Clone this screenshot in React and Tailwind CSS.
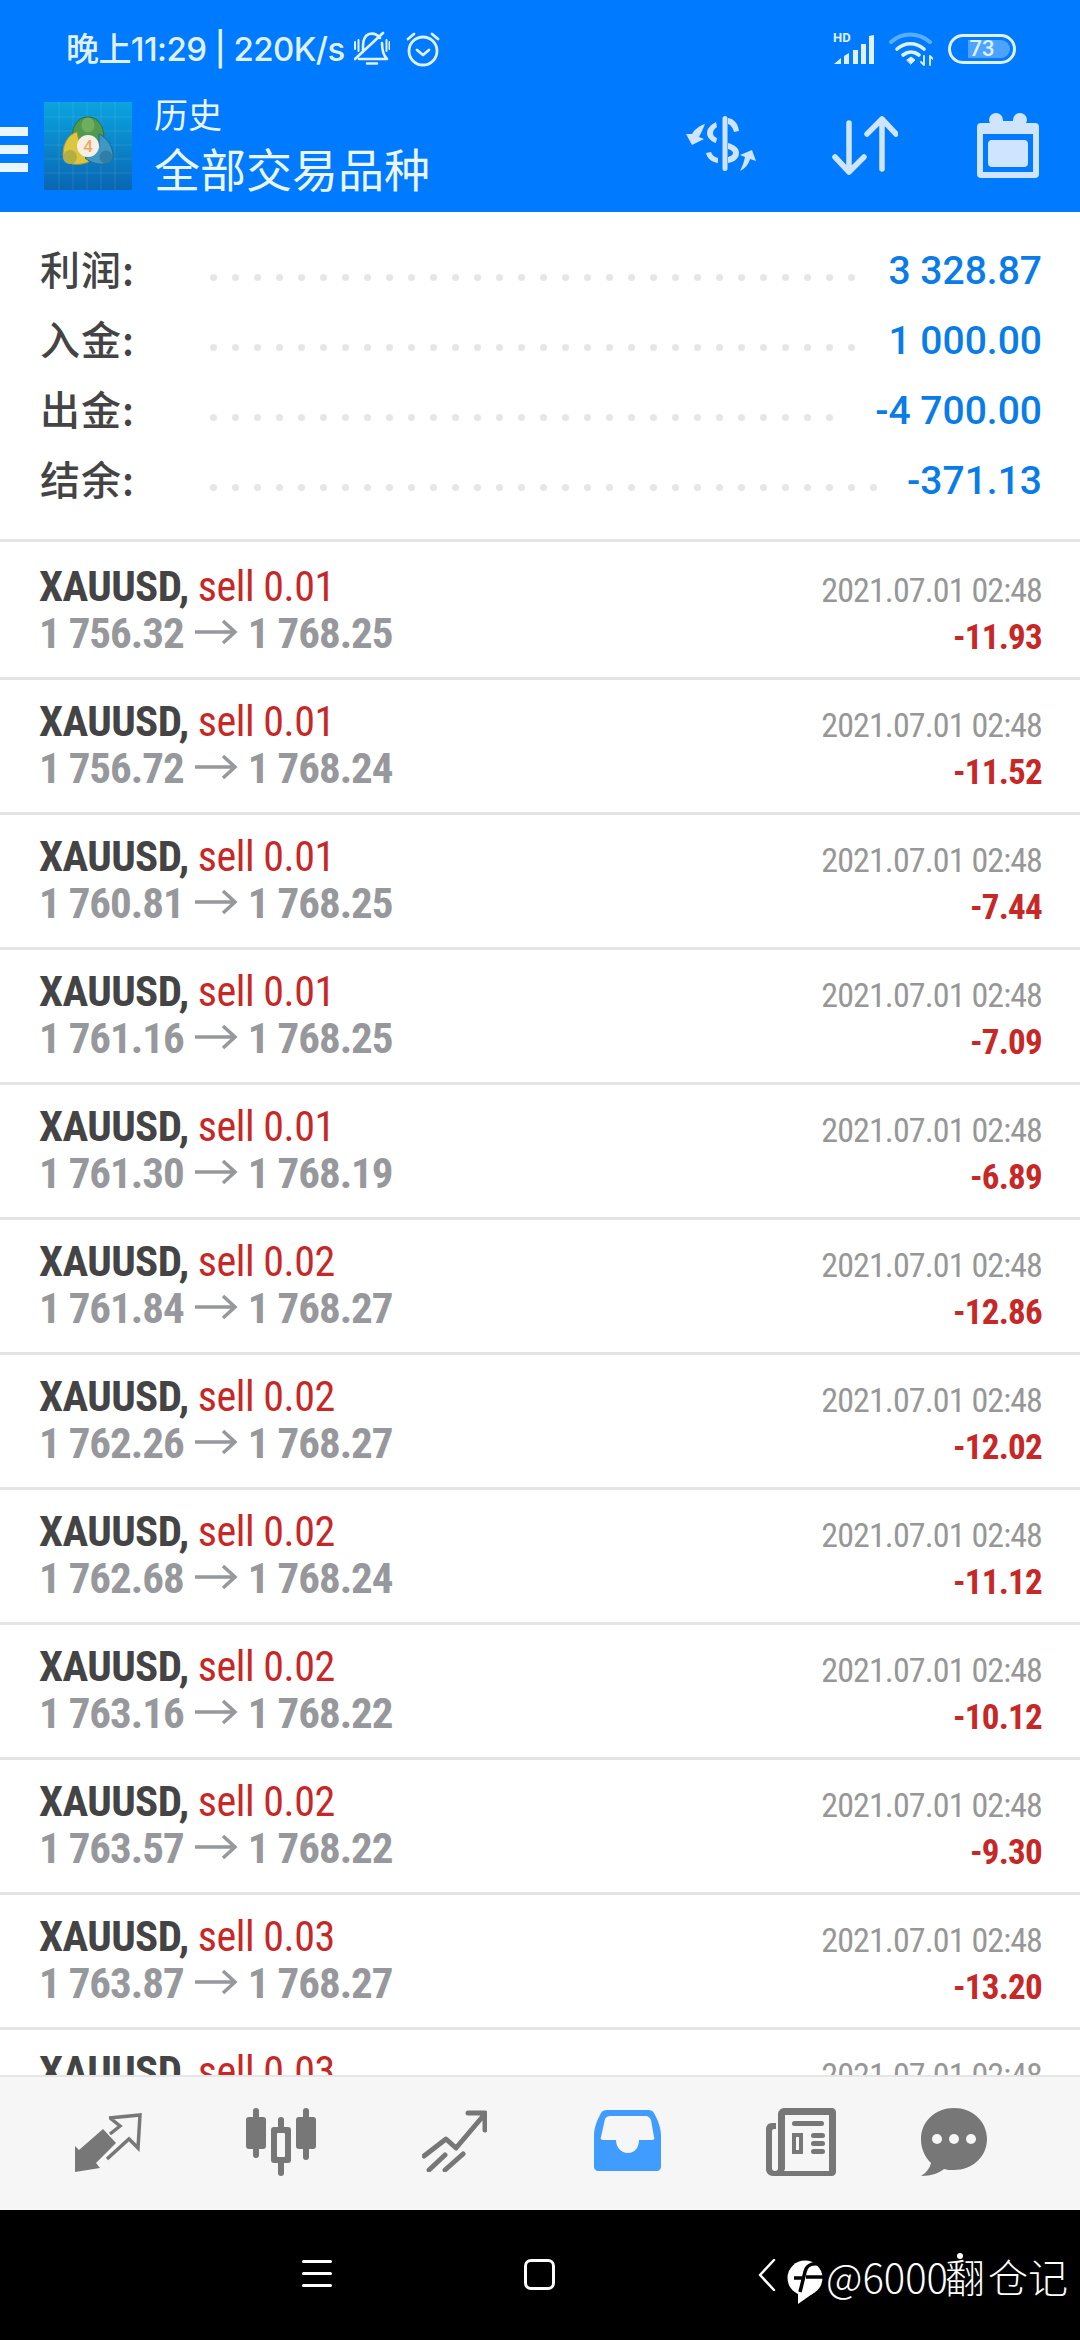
const summary = [
  { label: '利润', value: '3 328.87', dots: 30 },
  { label: '入金', value: '1 000.00', dots: 30 },
  { label: '出金', value: '-4 700.00', dots: 29 },
  { label: '结余', value: '-371.13', dots: 31 },
]

const trades = [
  ['0.01', '1 756.32', '1 768.25', '-11.93'],
  ['0.01', '1 756.72', '1 768.24', '-11.52'],
  ['0.01', '1 760.81', '1 768.25', '-7.44'],
  ['0.01', '1 761.16', '1 768.25', '-7.09'],
  ['0.01', '1 761.30', '1 768.19', '-6.89'],
  ['0.02', '1 761.84', '1 768.27', '-12.86'],
  ['0.02', '1 762.26', '1 768.27', '-12.02'],
  ['0.02', '1 762.68', '1 768.24', '-11.12'],
  ['0.02', '1 763.16', '1 768.22', '-10.12'],
  ['0.02', '1 763.57', '1 768.22', '-9.30'],
  ['0.03', '1 763.87', '1 768.27', '-13.20'],
  ['0.03', '1 764.10', '1 768.27', '-12.51'],
]

function StatusBar() {
  return (
    <div className="h-[90px] flex items-center pl-[66px] pr-[64px] pt-[8px] text-[#dff1ff]">
      <span className="text-[33px] leading-none font-['Inter','Noto_Sans_CJK_SC',sans-serif] font-medium whitespace-nowrap tracking-[-0.6px]">晚上11:29 | 220K/s</span>
      {/* muted bell */}
      <svg className="ml-[9px]" width="36" height="36" viewBox="0 0 36 36" fill="none" stroke="currentColor" strokeWidth="2.6" strokeLinecap="round" strokeLinejoin="round">
        <path d="M5 28H33C29 24 28 20 28 12M26 7C23 3 19 2 15 3 10 5 9 10 9 15v6M1 28 29 2M13 32.5h10" />
        <path d="M1 11v7M4.5 9v11M32.5 9v11M35.5 11v7" strokeWidth="2" />
      </svg>
      <svg className="ml-[15px]" width="36" height="36" viewBox="0 0 36 36" fill="none" stroke="currentColor" strokeWidth="2.8" strokeLinecap="round" strokeLinejoin="round">
        <circle cx="18" cy="20" r="14" />
        <path d="M12 19l6 5 6-5M3 8l6-5M33 8l-6-5" />
      </svg>
      <div className="ml-auto flex items-center">
        {/* HD signal */}
        <div className="relative w-[41px] h-[30px]">
          <span className="absolute left-0 top-[-3px] text-[13px] leading-none font-bold font-['Roboto',sans-serif]">HD</span>
          <svg className="absolute inset-0" width="41" height="30" viewBox="0 0 41 30" fill="currentColor">
            <path d="M1 30l7-6v6zM11 22l5-3v11h-5zM20 30V16h5v14zM28 30V10h5v20zM36 30V2l5-1v29z" />
          </svg>
        </div>
        <svg className="ml-[15px]" width="44" height="34" viewBox="0 0 44 34" fill="none" strokeLinecap="round">
          <path d="M2 10C13 0 29 0 41 10" stroke="#5aaeff" strokeWidth="4" />
          <path d="M8 17c8-7 19-7 27 0M14 23c5-4 11-4 16 0" stroke="currentColor" strokeWidth="3.6" />
          <path d="M18 28l4-3 4 3-4 4z" fill="currentColor" stroke="currentColor" />
          <path d="M35 24v9M32 30l3 3M41 33v-9M41 24l3 3" stroke="currentColor" strokeWidth="1.8" />
        </svg>
        <div className="ml-[15px] relative w-[68px] h-[30px] rounded-full border-[3px] border-[#dff1ff]">
          <div className="absolute right-[3px] top-[3px] bottom-[3px] w-[42px] rounded-r-full bg-[#4da3ff]" />
          <span className="absolute inset-0 flex items-center justify-center text-[22px] leading-none font-medium font-['Roboto',sans-serif]">73</span>
        </div>
      </div>
    </div>
  )
}

function Logo() {
  return (
    <svg width="88" height="88" viewBox="0 0 88 88">
      <defs>
        <linearGradient id="logoBg" x1="0" y1="0" x2="0" y2="1">
          <stop offset="0" stopColor="#0aa4e0" />
          <stop offset="1" stopColor="#0a66b2" />
        </linearGradient>
      </defs>
      <rect width="88" height="88" fill="url(#logoBg)" />
      <path d="M15 0v88M29 0v88M43 0v88M57 0v88M71 0v88M0 15h88M0 29h88M0 43h88M0 57h88M0 71h88" stroke="#ffffff" strokeOpacity="0.1" strokeWidth="1" />
      <path d="M29 40C26 27 33 15 44 15s18 12 15 25l-15 6z" fill="#4f9a4c" stroke="#2f6d3a" strokeWidth="1" />
      <ellipse cx="44" cy="23" rx="6.5" ry="7.5" fill="#6fae5f" />
      <path d="M33 30c-8 2-14 11-14 22 0 4 2 7 6 9 8 3 18 1 24-4L36 44z" fill="#dcc63e" stroke="#a8982b" strokeWidth="1" />
      <circle cx="26" cy="55" r="7" fill="#b5ad45" />
      <path d="M55 32c8 4 14 12 14 22 0 3-2 6-5 7-8 3-17 0-23-5l14-12z" fill="#3f97c4" stroke="#22688f" strokeWidth="1" />
      <circle cx="62" cy="55" r="6.5" fill="#2f7ea8" />
      <circle cx="44" cy="44" r="11" fill="#f7efe6" />
      <text x="44" y="50" textAnchor="middle" fontSize="17" fontWeight="500" fill="#f0a860" fontFamily="Roboto, sans-serif">4</text>
    </svg>
  )
}

function TitleBar() {
  return (
    <div className="h-[122px] flex items-start text-[#e9f5ff]">
      <div className="w-[28px] mt-[37px] flex flex-col gap-[9px]">
        <div className="h-[9px] bg-[#e9f5ff]" />
        <div className="h-[9px] bg-[#e9f5ff]" />
        <div className="h-[9px] bg-[#e9f5ff]" />
      </div>
      <div className="ml-[16px] mt-[12px]"><Logo /></div>
      <div className="ml-[22px] flex flex-col font-['Noto_Sans_CJK_SC',sans-serif]">
        <span className="mt-[4px] text-[34px] leading-[40px]">历史</span>
        <span className="mt-[4px] text-[46px] leading-[58px] whitespace-nowrap">全部交易品种</span>
      </div>
      <div className="ml-auto flex items-start text-[#cfe5ff]">
        <svg className="mt-[26px]" width="72" height="56" viewBox="0 0 72 56" fill="currentColor">
          <rect x="36.5" y="0" width="5" height="55" rx="2.5" />
          <path d="M42 2c6 1 10 5 11 13l-5 1c-1-4-3-7-6-8z" />
          <path d="M30 6c-6 3-9 7-9 11s3 8 9 10l1-5c-3-1-4-3-4-5s1-4 4-6z" />
          <path d="M20 37l5-1c1 3 3 5 7 6v5c-7-1-11-5-12-10z" />
          <path d="M42 27c7 2 11 5 11 10s-4 9-11 10v-6c3-1 5-2 5-4s-2-3-5-4z" />
          <path d="M19 8c-6 2-10 5-13 10L0 18l6 11 12-6-5-2c2-4 4-8 6-13z" />
          <path d="M54 55c6-3 9-8 10-12l6 2-4-11-12 5 5 2c-1 5-3 10-5 14z" />
        </svg>
        <svg className="ml-[74px] mt-[26px]" width="66" height="60" viewBox="0 0 66 60" fill="none" stroke="currentColor" strokeWidth="5.5" strokeLinecap="round" strokeLinejoin="round">
          <path d="M17 7v49M3 41l14 15 15-15" />
          <path d="M50 3v50M35 18L50 3l14 15" />
        </svg>
        <svg className="ml-[79px] mr-[41px] mt-[23px]" width="62" height="65" viewBox="0 0 62 65" fill="currentColor">
          <path fillRule="evenodd" d="M4 10h9a6 6 0 0 1-1-3 7 7 0 0 1 14 0v1h10V7a7 7 0 0 1 14 0 6 6 0 0 1-1 3h9a4 4 0 0 1 4 4v47a4 4 0 0 1-4 4H4a4 4 0 0 1-4-4V14a4 4 0 0 1 4-4zm2 11v38h50V21z" />
          <rect x="11" y="27" width="40" height="27" rx="4" />
        </svg>
      </div>
    </div>
  )
}

function SummaryRow({ label, value, dots }) {
  return (
    <div className="h-[70px] flex items-center">
      <span className="w-[170px] shrink-0 -mt-[5px] text-[40px] leading-none text-[#444] font-['Noto_Sans_CJK_SC',sans-serif] font-medium whitespace-nowrap tracking-[1px]">{label}:</span>
      <div className="flex gap-[15px] mt-[14px]">
        {Array.from({ length: dots }).map((_, i) => (
          <span key={i} className="w-[7px] h-[7px] rounded-full bg-[#e6e6e6]" />
        ))}
      </div>
      <span className="ml-auto mt-[3px] text-[39px] leading-none font-medium text-[#0a7ce8] font-['Roboto',sans-serif] whitespace-nowrap">{value}</span>
    </div>
  )
}

function TradeRow({ lots, open, close, profit }) {
  return (
    <div className="h-[135px] shrink-0 border-b-[3px] border-[#e4e4e4] pl-[39px] pr-[38px] pt-[18px] font-['Roboto',sans-serif] [font-stretch:75%] flex justify-between">
      <div className="flex flex-col">
        <div className="text-[43px] leading-[47px] whitespace-nowrap">
          <span className="font-bold text-[#444] tracking-[-0.6px]">XAUUSD,</span>
          <span className="ml-[9px] text-[42px] text-[#c62828] tracking-[-0.45px]">sell {lots}</span>
        </div>
        <div className="flex items-center text-[43px] leading-[47px] font-bold text-[#97989c] tracking-[-1px] whitespace-nowrap">
          <span>{open}</span>
          {/* long thin arrow, wider than any lucide arrow */}
          <svg className="ml-[11px] mr-[10px] -mt-[4px]" width="43" height="26" viewBox="0 0 43 26" fill="none" stroke="currentColor" strokeWidth="3.5" strokeLinejoin="miter">
            <path d="M0 13h40M28 2l12 11-12 11" />
          </svg>
          <span>{close}</span>
        </div>
      </div>
      <div className="flex flex-col items-end mt-[3px]">
        <span className="text-[34px] leading-[48px] font-normal text-[#979797] tracking-[-0.9px] whitespace-nowrap">2021.07.01 02:48</span>
        <span className="text-[35px] leading-[48px] font-bold text-[#c62828] tracking-[-0.75px]">{profit}</span>
      </div>
    </div>
  )
}

function BottomNav() {
  return (
    <div className="h-[135px] shrink-0 border-t-[2px] border-[#e6e6e6] bg-[#f6f6f6] flex items-start text-[#777]">
      <svg className="ml-[75px] mt-[36px]" width="67" height="59" viewBox="0 0 67 59" fill="currentColor">
        <path d="M0 33l4 4 24-21 13 14-20 20 4 5-25 4z" />
        <path fill="none" stroke="currentColor" strokeWidth="3.5" d="M34 5l31-3-2 33-9-9-22 20M35 21l10-8-10-8" />
      </svg>
      <svg className="ml-[104px] mt-[31px]" width="70" height="68" viewBox="0 0 70 68" fill="currentColor">
        <rect x="0" y="9" width="20" height="32" rx="3" />
        <rect x="7" y="0" width="6" height="50" rx="3" />
        <rect x="50" y="9" width="20" height="32" rx="3" />
        <rect x="57" y="0" width="6" height="52" rx="3" />
        <rect x="32" y="9" width="6" height="59" rx="3" />
        <rect x="25" y="19" width="20" height="36" rx="3" />
        <rect x="31" y="25" width="8" height="24" rx="1" fill="#f6f6f6" />
      </svg>
      <svg className="ml-[106px] mt-[33px]" width="65" height="62" viewBox="0 0 65 62" fill="none" stroke="currentColor" strokeWidth="5" strokeLinecap="round" strokeLinejoin="round">
        <path d="M2 46l22-17 10 9 28-33M46 3h17v17" />
        <path d="M7 60l16-15M23 60l18-16" />
      </svg>
      <svg className="ml-[107px] mt-[33px]" width="67" height="61" viewBox="0 0 67 61" fill="#409cff">
        <path fillRule="evenodd" d="M13 0h41c3 0 5 1 6 3 4 7 7 15 7 23v31c0 2-2 4-4 4H4c-2 0-4-2-4-4V26C0 18 3 10 7 3c1-2 3-3 6-3zm3 6c-2 0-4 1-5 3L7 27c-1 1 0 3 2 3h13c0 7 5 13 12 13s11-6 11-13h13c2 0 3-2 2-3L57 10c-1-2-3-4-5-4z" />
      </svg>
      <svg className="ml-[105px] mt-[31px]" width="70" height="68" viewBox="0 0 70 68" fill="currentColor">
        <path fillRule="evenodd" d="M18 0h48c2 0 4 2 4 4v60c0 2-2 4-4 4H7c-4 0-7-3-7-7V21c0-3 2-6 6-6h4v6H8c-1 0-2 1-2 2v37c0 2 1 3 3 3s3-1 3-3V6c0-3 3-6 6-6zm1 7v54l-1 2h45V7z" />
        <rect x="26" y="13" width="32" height="5" rx="2.5" />
        <path fillRule="evenodd" d="M26 25h11v21H26zm4 4v13h3V29z" />
        <rect x="45" y="25" width="14" height="5" rx="2.5" />
        <rect x="45" y="33" width="14" height="5" rx="2.5" />
        <rect x="45" y="41" width="14" height="5" rx="2.5" />
      </svg>
      <svg className="ml-[85px] mt-[31px]" width="66" height="68" viewBox="0 0 66 68" fill="currentColor">
        <path d="M33 0c18 0 33 13 33 31S51 62 33 62c-4 0-7 0-10-1-5 4-12 7-23 7 5-3 9-8 10-13C4 49 0 41 0 31 0 13 15 0 33 0z" />
        <circle cx="16" cy="31" r="5" fill="#f6f6f6" />
        <circle cx="33" cy="31" r="5" fill="#f6f6f6" />
        <circle cx="50" cy="31" r="5" fill="#f6f6f6" />
      </svg>
    </div>
  )
}

function SystemBar() {
  return (
    <div className="h-[130px] shrink-0 bg-black text-white flex items-start relative">
      <div className="ml-[302px] mt-[50px] w-[30px] flex flex-col gap-[9px]">
        <div className="h-[3px] rounded-full bg-white" />
        <div className="h-[3px] rounded-full bg-white" />
        <div className="h-[3px] rounded-full bg-white" />
      </div>
      <div className="ml-[192px] mt-[49px] w-[31px] h-[31px] rounded-[7px] border-[3px] border-white" />
      <svg className="ml-[203px] mt-[49px]" width="18" height="32" viewBox="0 0 18 32" fill="none" stroke="white" strokeWidth="2.5" strokeLinecap="round" strokeLinejoin="round">
        <path d="M16 1L2 16l14 15" />
      </svg>
      <svg className="ml-[11px] mt-[50px]" width="36" height="44" viewBox="0 0 36 44" fill="none">
        <circle cx="18" cy="18" r="17.5" fill="white" />
        <path d="M11 30v14l17-12z" fill="white" />
        <path d="M31 4C24 3 19 6 18 12L13 32" stroke="black" strokeWidth="3.5" />
        <path d="M7 18h8M19 17h17" stroke="black" strokeWidth="3.5" />
      </svg>
      <span className="ml-[3px] mt-[41px] text-[40px] leading-[50px] font-light whitespace-nowrap font-['Noto_Sans_CJK_SC',sans-serif]">@6000<span className="-ml-[3px]">翻</span><span className="ml-[3px]">仓记</span></span>
      {/* watermark dot sits over the text */}
      <span className="absolute left-[957px] top-[43px] w-[6px] h-[6px] rounded-full bg-white" />
    </div>
  )
}

export default function App() {
  return (
    <div className="w-[1080px] h-[2340px] flex flex-col bg-white overflow-hidden">
      <header className="h-[212px] shrink-0 bg-[#007aff]">
        <StatusBar />
        <TitleBar />
      </header>
      <section className="h-[330px] shrink-0 border-b-[3px] border-[#e4e4e4] pl-[40px] pr-[38px] pt-[23px]">
        {summary.map((s) => (
          <SummaryRow key={s.label} {...s} />
        ))}
      </section>
      <div className="flex-1 min-h-0 overflow-hidden flex flex-col pt-[3px]">
        {trades.map((t, i) => (
          <TradeRow key={i} lots={t[0]} open={t[1]} close={t[2]} profit={t[3]} />
        ))}
      </div>
      <BottomNav />
      <SystemBar />
    </div>
  )
}
